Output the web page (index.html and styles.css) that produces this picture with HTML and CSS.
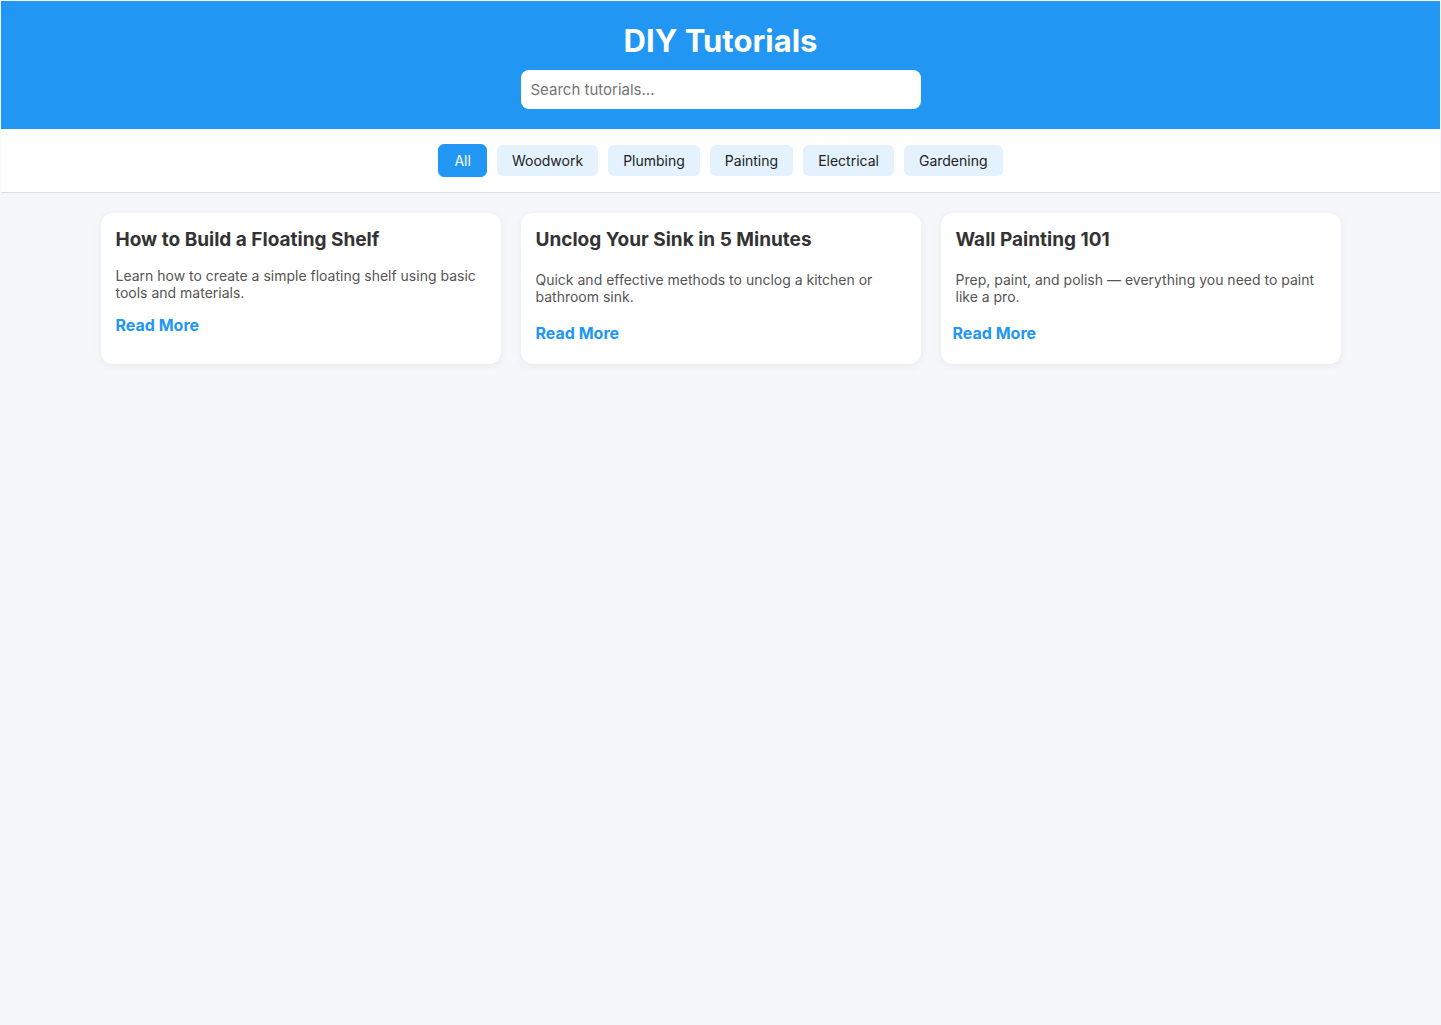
FILE: index.html
```html
<!DOCTYPE html>
<html lang="en">
<head>
<meta charset="utf-8">
<title>DIY Tutorials</title>
<link rel="stylesheet" href="styles.css">
</head>
<body>
<div class="page">
  <header class="header">
    <h1 class="title">DIY Tutorials</h1>
    <input class="search" type="text" placeholder="Search tutorials...">
  </header>
  <nav class="filters">
    <button class="chip chip-active">All</button>
    <button class="chip">Woodwork</button>
    <button class="chip">Plumbing</button>
    <button class="chip">Painting</button>
    <button class="chip">Electrical</button>
    <button class="chip">Gardening</button>
  </nav>
  <main class="grid">
    <article class="card">
      <h3 class="card-title">How to Build a Floating Shelf</h3>
      <p class="card-text">Learn how to create a simple floating shelf using basic tools and materials.</p>
      <a class="card-link" href="#">Read More</a>
    </article>
    <article class="card card-spaced">
      <h3 class="card-title">Unclog Your Sink in 5 Minutes</h3>
      <p class="card-text">Quick and effective methods to unclog a kitchen or bathroom sink.</p>
      <a class="card-link" href="#">Read More</a>
    </article>
    <article class="card card-spaced">
      <h3 class="card-title">Wall Painting 101</h3>
      <p class="card-text">Prep, paint, and polish — everything you need to paint like a pro.</p>
      <a class="card-link card-link-shift" href="#">Read More</a>
    </article>
  </main>
</div>
</body>
</html>
```
FILE: styles.css
```css
* { box-sizing: border-box; }
html, body { margin: 0; padding: 0; }
body {
  font-family: Inter, "Noto Sans", sans-serif;
  background: #f6f7fb;
  padding: 1px;
  background-clip: content-box;
  min-height: 1025px;
}
.page {
  min-height: 1023px;
  background: #f5f7fb;
}
.header {
  background: #2196f3;
  padding: 20px 0 20px;
  display: flex;
  flex-direction: column;
  align-items: center;
}
.title {
  margin: 0 0 10px;
  color: #fff;
  font-size: 31px;
  font-weight: 700;
  line-height: 39px;
}
.search {
  width: 400px;
  height: 39px;
  border: none;
  border-radius: 8px;
  padding: 0 10px;
  font-family: Inter, "Noto Sans", sans-serif;
  font-size: 15px;
  color: #333;
  background: #fff;
  outline: none;
}
.search::placeholder { color: #757575; }
.filters {
  background: #fff;
  border-bottom: 1px solid #dde0e4;
  padding: 15px 0;
  display: flex;
  justify-content: center;
  align-items: center;
  gap: 10px;
}
.chip {
  font-family: Inter, "Noto Sans", sans-serif;
  font-size: 14px;
  line-height: 17px;
  padding: 7px 15px;
  border: none;
  border-radius: 6px;
  background: #e3f2fd;
  color: #222;
  cursor: pointer;
}
.chip-active {
  background: #2196f3;
  color: #fff;
  border: 1px solid #2196f3;
  padding: 7px 15px;
}
.grid {
  display: grid;
  grid-template-columns: repeat(3, 400px);
  gap: 20px;
  justify-content: center;
  padding: 20px 0;
}
.card {
  background: #fff;
  border-radius: 12px;
  padding: 17px 16px 20px 15px;
  box-shadow: 0 2px 10px rgba(0, 0, 0, 0.06);
  min-height: 151px;
}
.card-title {
  margin: 0 0 17px;
  font-size: 19px;
  line-height: 20px;
  font-weight: 700;
  color: #333;
}
.card-text {
  margin: 0 0 14px;
  font-size: 14px;
  line-height: 17px;
  color: #555;
}
.card-spaced .card-title { margin-bottom: 21px; }
.card-spaced .card-text { margin-bottom: 18px; }
.card-link {
  display: inline-block;
  color: #2196f3;
  font-weight: 700;
  font-size: 16px;
  line-height: 20px;
  text-decoration: none;
}
.card-link-shift { margin-left: -3px; }
```
